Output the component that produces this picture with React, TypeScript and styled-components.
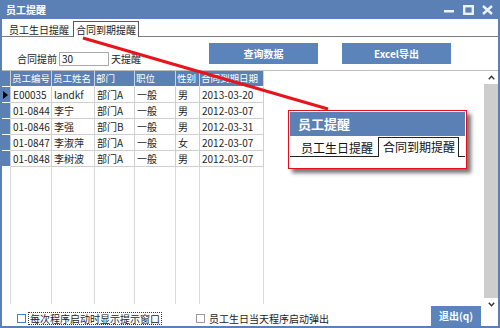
import React from 'react';
import styled, { createGlobalStyle } from 'styled-components';

const BLUE = '#5a80b5';
const LINE = '#cfcfcf';

const GlobalStyle = createGlobalStyle`
  html, body {
    margin: 0;
    padding: 0;
    background: #fff;
  }
  body {
    font-family: "Noto Sans CJK SC", "Noto Sans", sans-serif;
    font-size: 10px;
    color: #1b1b1b;
  }
  * {
    box-sizing: border-box;
  }
`;

const Window = styled.div`
  position: relative;
  width: 500px;
  height: 328px;
  display: flex;
  flex-direction: column;
  background: #fff;
  border: 2px solid ${BLUE};
  border-top: none;
  overflow: hidden;
`;

const TitleBar = styled.div`
  height: 19px;
  flex: none;
  display: flex;
  align-items: center;
  padding: 0 5px 0 4px;
  background: ${BLUE};
  color: #fff;
  font-weight: 700;
  font-size: 10px;
`;

const Controls = styled.div`
  margin-left: auto;
  display: flex;
  align-items: center;
  gap: 8px;
  color: #eef2f8;
`;

const TabStrip = styled.div`
  height: 18px;
  flex: none;
  display: flex;
  align-items: flex-end;
  padding-left: 4px;
  border-bottom: 1px solid #7d7d7d;
`;

const Tab = styled.div<{ $active?: boolean }>`
  height: ${(p) => (p.$active ? '16px' : '15px')};
  line-height: 15px;
  padding: 0 2px;
  margin-left: ${(p) => (p.$active ? '1px' : '0')};
  margin-bottom: ${(p) => (p.$active ? '-1px' : '0')};
  background: #fff;
  border: ${(p) => (p.$active ? '1px solid #5c5c5c' : '1px solid transparent')};
  border-bottom: none;
  white-space: nowrap;
`;

const ToolRow = styled.div`
  height: 33px;
  flex: none;
  display: flex;
  align-items: flex-start;
  padding-left: 15px;
`;

const FilterGroup = styled.div`
  width: 192px;
  margin-top: 14px;
  display: flex;
  align-items: center;
  gap: 2px;
`;

const DaysInput = styled.input`
  width: 50px;
  height: 14px;
  padding: 0 2px;
  border: 1px solid #a9a9a9;
  font: inherit;
  font-size: 10px;
  color: #111;
  outline: none;
`;

const ActionButton = styled.button<{ $width?: number }>`
  width: ${(p) => p.$width ?? 109}px;
  height: 21px;
  margin-top: 6px;
  margin-right: 24px;
  border: none;
  background: #5b84bb;
  color: #fff;
  font-family: "Noto Sans CJK SC", "Noto Sans", sans-serif;
  font-size: 10px;
  font-weight: 700;
  padding: 0;
`;

const GridSection = styled.div`
  flex: 1;
  display: flex;
  min-height: 0;
`;

const LeftColumn = styled.div`
  flex: 1;
  display: flex;
  flex-direction: column;
  min-width: 0;
`;

const DataGrid = styled.div`
  flex: 1;
  display: grid;
  grid-template-columns: 9px 41px 43px 40px 41px 24px 64px;
  grid-template-rows: repeat(6, 16px) 1fr;
  border-top: 1px solid #bdbdbd;
`;

const HeadCell = styled.div`
  background: ${BLUE};
  color: #fff;
  font-size: 9.5px;
  line-height: 15px;
  padding-left: 1px;
  border-right: 1px solid #c8d4e6;
  border-bottom: 1px solid #fff;
  white-space: nowrap;
  overflow: hidden;
`;

const Indicator = styled.div`
  position: relative;
  background: ${BLUE};
  border-right: 1px solid ${LINE};
  border-bottom: 1px solid #fff;
`;

const Arrow = styled.span`
  position: absolute;
  left: 1px;
  top: 4px;
  width: 0;
  height: 0;
  border-top: 4px solid transparent;
  border-bottom: 4px solid transparent;
  border-left: 5px solid #000;
`;

const Cell = styled.div`
  line-height: 15px;
  padding-left: 2px;
  border-right: 1px solid ${LINE};
  border-bottom: 1px solid ${LINE};
  white-space: nowrap;
  overflow: hidden;
  color: #1e1e1e;
`;

const FillCell = styled.div`
  border-right: 1px solid #dadada;
`;

const Footer = styled.div`
  height: 22px;
  flex: none;
  display: flex;
  align-items: center;
  padding-left: 15px;
`;

const Check = styled.label<{ $width: number }>`
  width: ${(p) => p.$width}px;
  display: flex;
  align-items: center;
  gap: 2px;
  margin-top: 6px;
  white-space: nowrap;
`;

const Box = styled.span<{ $focus?: boolean }>`
  width: 9px;
  height: 9px;
  background: #fff;
  border: 1px solid ${(p) => (p.$focus ? '#3d7fd1' : '#9a9a9a')};
`;

const CheckText = styled.span<{ $focus?: boolean }>`
  padding: 0 1px;
  line-height: 11px;
  border: 1px dotted ${(p) => (p.$focus ? '#333' : 'transparent')};
`;

const ExitButton = styled(ActionButton)`
  margin: 1px 3px 0 auto;
  height: 20px;
`;

const Scrollbar = styled.div`
  width: 14px;
  flex: none;
  display: flex;
  flex-direction: column;
  align-self: flex-start;
  height: 241px;
  border-top: 1px solid #bdbdbd;
`;

const ScrollButton = styled.div`
  height: 13px;
  flex: none;
  display: flex;
  align-items: center;
  justify-content: center;
  background: #fff;
`;

const ScrollTrack = styled.div`
  flex: 1;
  background: #cdcdcd;
`;

const Pointer = styled.svg`
  position: absolute;
  left: 0;
  top: 0;
  pointer-events: none;
`;

const Callout = styled.div`
  position: absolute;
  left: 286px;
  top: 110px;
  width: 179px;
  height: 59px;
  padding: 1px;
  background: #fff;
  border: 1px solid #e3101a;
  box-shadow: 4px 4px 4px rgba(0, 0, 0, 0.55);
`;

const CalloutTitle = styled.div`
  height: 24px;
  line-height: 24px;
  padding-left: 8px;
  background: ${BLUE};
  color: #fff;
  font-size: 13px;
  font-weight: 700;
`;

const CalloutTabs = styled.div`
  height: 21px;
  display: flex;
  align-items: flex-end;
  padding-left: 8px;
  border-bottom: 1px solid #222;
`;

const CalloutTab = styled.div<{ $active?: boolean }>`
  height: ${(p) => (p.$active ? '20px' : '18px')};
  line-height: 18px;
  font-size: 12px;
  padding: ${(p) => (p.$active ? '0 3px 0 4px' : '0 2px')};
  margin-left: ${(p) => (p.$active ? '2px' : '0')};
  margin-bottom: ${(p) => (p.$active ? '-1px' : '0')};
  background: #fff;
  color: #111;
  border: ${(p) => (p.$active ? '1px solid #222' : '1px solid transparent')};
  border-bottom: none;
  white-space: nowrap;
`;

const columns = ['员工编号', '员工姓名', '部门', '职位', '性别', '合同到期日期'];

const rows = [
  ['E00035', 'landkf', '部门A', '一般', '男', '2013-03-20'],
  ['01-0844', '李宁', '部门A', '一般', '男', '2012-03-07'],
  ['01-0846', '李强', '部门B', '一般', '男', '2012-03-31'],
  ['01-0847', '李淑萍', '部门A', '一般', '女', '2012-03-07'],
  ['01-0848', '李树波', '部门A', '一般', '男', '2012-03-07'],
];

const App: React.FC = () => {
  return (
    <Window>
      <GlobalStyle />
      <TitleBar>
        员工提醒
        <Controls>
          <svg width="11" height="10" viewBox="0 0 11 10">
            <rect x="0" y="5" width="10" height="2.5" fill="currentColor" />
          </svg>
          <svg width="11" height="10" viewBox="0 0 11 10">
            <rect x="1.2" y="1.2" width="8.6" height="7.6" fill="none" stroke="currentColor" strokeWidth="2.4" />
          </svg>
          <svg width="11" height="10" viewBox="0 0 11 10">
            <path d="M1 1 L10 9 M10 1 L1 9" stroke="currentColor" strokeWidth="2.4" />
          </svg>
        </Controls>
      </TitleBar>

      <TabStrip>
        <Tab>员工生日提醒</Tab>
        <Tab $active>合同到期提醒</Tab>
      </TabStrip>

      <ToolRow>
        <FilterGroup>
          合同提前
          <DaysInput defaultValue="30" />
          天提醒
        </FilterGroup>
        <ActionButton>查询数据</ActionButton>
        <ActionButton>Excel导出</ActionButton>
      </ToolRow>

      <GridSection>
        <LeftColumn>
          <DataGrid>
            <Indicator />
            {columns.map((c) => (
              <HeadCell key={c}>{c}</HeadCell>
            ))}
            {rows.map((r, i) => (
              <React.Fragment key={r[0]}>
                <Indicator>{i === 0 && <Arrow />}</Indicator>
                {r.map((v, j) => (
                  <Cell key={j}>{v}</Cell>
                ))}
              </React.Fragment>
            ))}
            {[0, 1, 2, 3, 4, 5, 6].map((k) => (
              <FillCell key={k} />
            ))}
          </DataGrid>
          <Footer>
            <Check $width={179}>
              <Box $focus />
              <CheckText $focus>每次程序启动时显示提示窗口</CheckText>
            </Check>
            <Check $width={200}>
              <Box />
              <CheckText>员工生日当天程序启动弹出</CheckText>
            </Check>
            <ExitButton $width={50}>退出(q)</ExitButton>
          </Footer>
        </LeftColumn>
        <Scrollbar>
          <ScrollButton>
            <svg width="7" height="5" viewBox="0 0 7 5">
              <path d="M0.8 4.2 L3.5 1.3 L6.2 4.2" fill="none" stroke="#333" strokeWidth="1.4" />
            </svg>
          </ScrollButton>
          <ScrollTrack />
          <ScrollButton>
            <svg width="7" height="5" viewBox="0 0 7 5">
              <path d="M0.8 0.8 L3.5 3.7 L6.2 0.8" fill="none" stroke="#333" strokeWidth="1.4" />
            </svg>
          </ScrollButton>
        </Scrollbar>
      </GridSection>

      <Pointer width="500" height="328" viewBox="0 0 500 328">
        <line x1="81" y1="38" x2="326" y2="109" stroke="#e8141b" strokeWidth="3" />
      </Pointer>

      <Callout>
        <CalloutTitle>员工提醒</CalloutTitle>
        <CalloutTabs>
          <CalloutTab>员工生日提醒</CalloutTab>
          <CalloutTab $active>合同到期提醒</CalloutTab>
        </CalloutTabs>
      </Callout>
    </Window>
  );
};

export default App;
